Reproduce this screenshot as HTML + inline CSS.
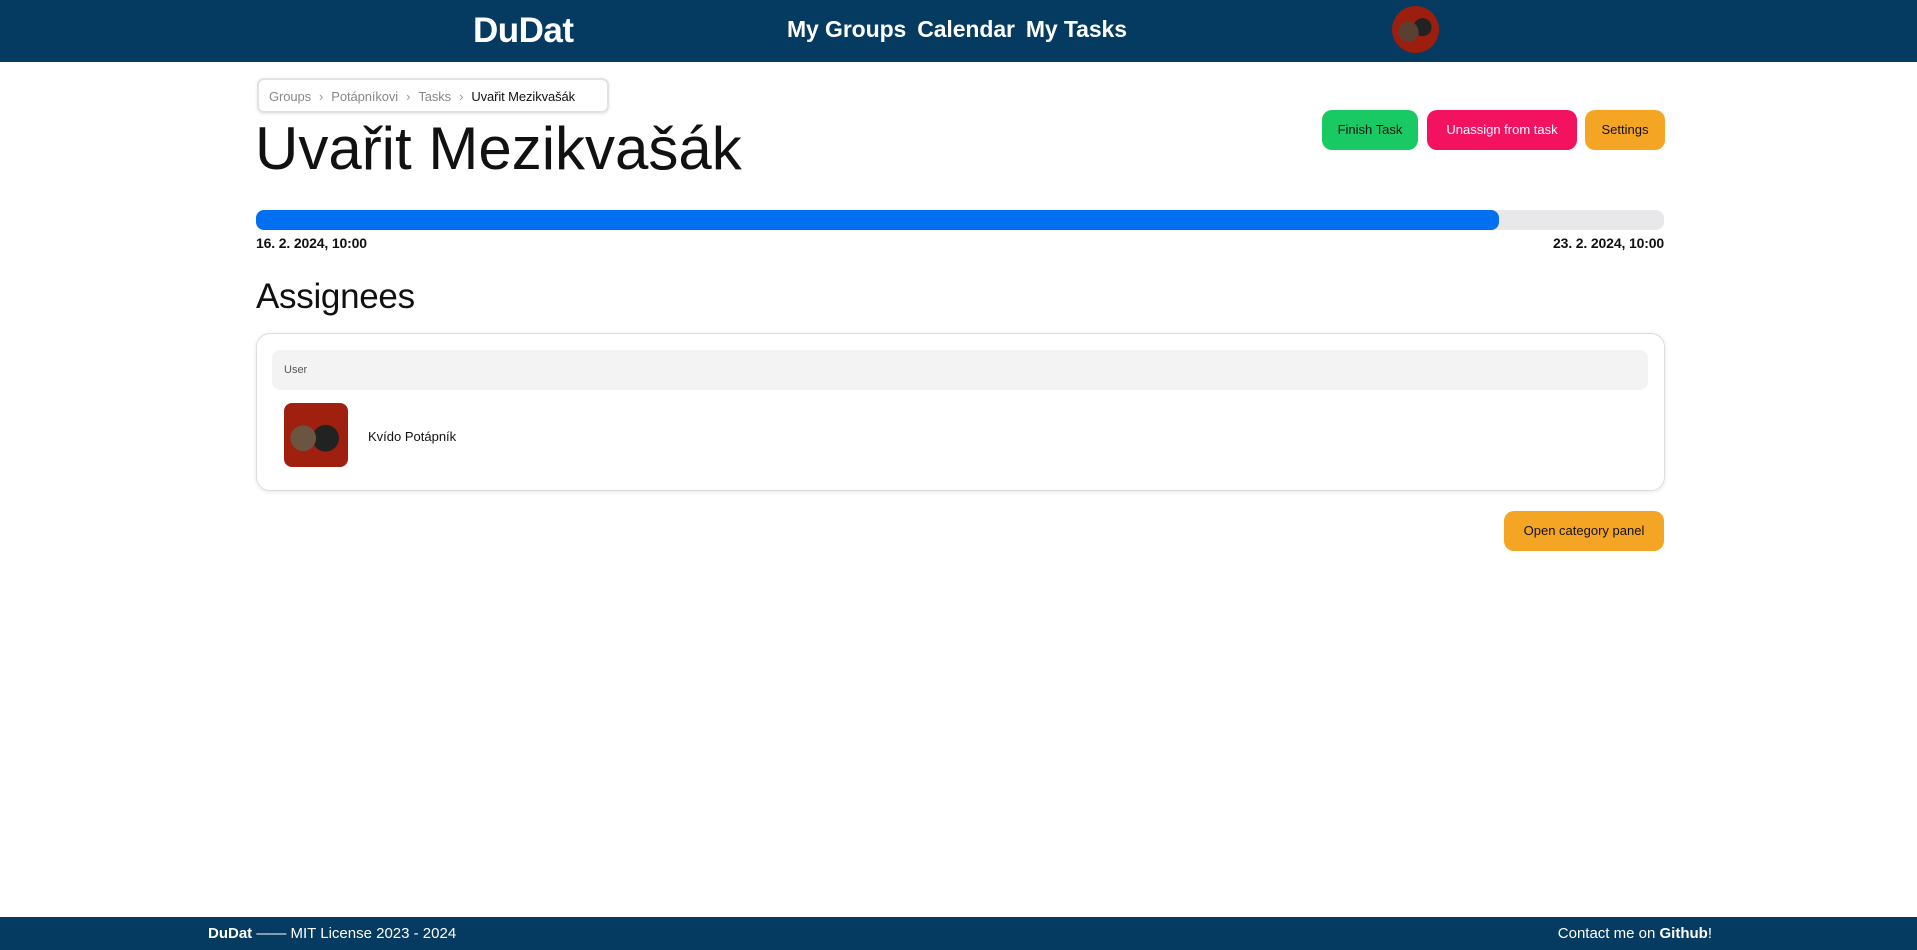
<!DOCTYPE html>
<html><head><meta charset="utf-8"><style>
*{box-sizing:border-box;margin:0;padding:0}
body{width:1917px;height:950px;position:relative;background:#fff;font-family:"Liberation Sans",sans-serif;color:#111;overflow:hidden}
.hdr{position:absolute;left:0;top:0;width:1917px;height:62px;background:#053a61}
.logo{position:absolute;left:473px;top:11px;font-size:35px;font-weight:bold;color:#fff;letter-spacing:-0.5px}
.nav{position:absolute;left:787px;top:16px;font-size:23px;font-weight:bold;color:#fff;word-spacing:0px;letter-spacing:-0.1px}
.nav span{margin-right:11px}
.av{position:absolute;left:1392px;top:6px;width:47px;height:47px;border-radius:50%;background:radial-gradient(circle at 35% 55%,#5a4030 0 25%,transparent 26%),radial-gradient(circle at 65% 45%,#222 0 22%,transparent 23%),#9b1e0e}
.abs{position:absolute}
.bc{left:257px;top:78px;width:352px;height:35px;border:2px solid #e2e2e2;border-radius:7px;box-shadow:0 1px 3px rgba(0,0,0,.1);font-size:13px;color:#888;padding:9px 10px;white-space:nowrap;letter-spacing:-0.1px}
.bc b{font-weight:normal;color:#111}
.bc i{font-style:normal;margin:0 8px;color:#999}
h1{position:absolute;left:255px;top:114px;font-size:60px;font-weight:normal;color:#111}
.btn{position:absolute;top:110px;height:40px;border-radius:10px;font-size:13px;text-align:center;line-height:40px}
.bar{left:256px;top:210px;width:1408px;height:20px;border-radius:8px;background:#e8e8ea}
.fill{left:256px;top:210px;width:1243px;height:20px;border-radius:8px;background:#0070f0}
.date{top:235px;font-size:14px;font-weight:bold;letter-spacing:-0.15px}
.h2{left:256px;top:277px;font-size:35px;color:#111;letter-spacing:-0.3px}
.card{left:256px;top:333px;width:1409px;height:158px;border:1px solid #ddd;border-radius:14px;box-shadow:0 1px 4px rgba(0,0,0,.1)}
.th{left:272px;top:350px;width:1376px;height:40px;background:#f3f3f3;border-radius:8px;font-size:11px;color:#555;padding:14px 12px}
.ua{left:284px;top:403px;width:64px;height:64px;border-radius:8px;background:radial-gradient(circle at 30% 55%,#6b5440 0 22%,transparent 23%),radial-gradient(circle at 65% 55%,#222 0 24%,transparent 25%),#a02010}
.nm{left:368px;top:429px;font-size:13px}
.ft{left:0;top:917px;width:1917px;height:33px;background:#053a61;color:#fff;font-size:15px}
</style></head><body>
<div class="hdr"><div class="logo">DuDat</div><div class="nav"><span>My Groups</span><span>Calendar</span><span>My Tasks</span></div><div class="av"></div></div>
<div class="abs bc">Groups<i>›</i>Potápníkovi<i>›</i>Tasks<i>›</i><b>Uvařit Mezikvašák</b></div>
<h1>Uvařit Mezikvašák</h1>
<div class="btn" style="left:1322px;width:96px;background:#19c964;color:#111">Finish Task</div>
<div class="btn" style="left:1427px;width:150px;background:#f31260;color:#fff">Unassign from task</div>
<div class="btn" style="left:1585px;width:80px;background:#f5a524;color:#111">Settings</div>
<div class="abs bar"></div><div class="abs fill"></div>
<div class="abs date" style="left:256px">16. 2. 2024, 10:00</div>
<div class="abs date" style="right:253px">23. 2. 2024, 10:00</div>
<div class="abs h2">Assignees</div>
<div class="abs card"></div>
<div class="abs th">User</div>
<div class="abs ua"></div>
<div class="abs nm">Kvído Potápník</div>
<div class="btn" style="left:1504px;top:511px;width:160px;background:#f5a524;color:#111">Open category panel</div>
<div class="abs ft"><span class="abs" style="left:208px;top:8px"><b>DuDat</b> —— MIT License 2023 - 2024</span><span class="abs" style="right:205px;top:8px">Contact me on <b>Github</b>!</span></div>
</body></html>
